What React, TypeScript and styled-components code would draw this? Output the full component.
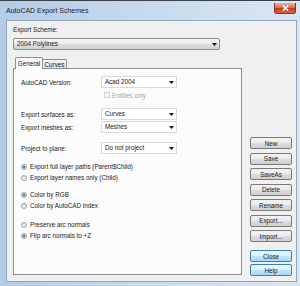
import React from 'react';
import styled, { createGlobalStyle, css } from 'styled-components';

const Global = createGlobalStyle`
  html, body { margin: 0; padding: 0; background: #2f3540; }
  body { font-family: "Liberation Sans", Arial, sans-serif; }
`;

const Window = styled.div`
  width: 300px;
  height: 286px;
  box-sizing: border-box;
  display: flex;
  flex-direction: column;
  background: linear-gradient(to right, #b4cbe5 0%, #c6d9ee 45%, #d9e6f4 100%);
  border-top: 1px solid #3b4048;
  padding: 0 3px 4px 6px;
`;

const TitleBar = styled.div`
  height: 19px;
  flex: none;
  display: flex;
  justify-content: space-between;
  align-items: flex-start;
`;

const TitleText = styled.div`
  margin-top: 6px;
  font-size: 7px;
  line-height: 8px;
  color: #1e1e1e;
`;

const CloseBtn = styled.div`
  box-sizing: border-box;
  width: 22px;
  height: 11px;
  margin-top: 2px;
  margin-right: 1px;
  border: 1px solid #8a2f1f;
  border-top: none;
  border-radius: 0 0 3px 3px;
  background: linear-gradient(#eab0a2 0%, #d9735b 45%, #c43a1f 55%, #d9663f 100%);
  display: flex;
  align-items: center;
  justify-content: center;
`;

const Client = styled.div`
  flex: 1;
  box-sizing: border-box;
  background: #f0f0f0;
  border: 1px solid #8fa5bf;
  padding: 4px 0 0 6px;
  display: flex;
  flex-direction: column;
  color: #202020;
  font-size: 6.3px;
`;

const FieldLabel = styled.div`
  line-height: 10px;
  height: 10px;
`;

const ComboBase = css`
  box-sizing: border-box;
  height: 12px;
  display: flex;
  align-items: center;
  justify-content: space-between;
  padding: 0 2px 0 3px;
  line-height: 10px;
`;

const SchemeCombo = styled.div`
  ${ComboBase};
  width: 207px;
  margin-top: 3px;
  border: 1px solid #8c8c8c;
  border-radius: 2px;
  background: linear-gradient(#f5f5f5 0%, #ececec 50%, #dedede 51%, #d2d2d2 100%);
`;

const Dropdown = styled.div`
  ${ComboBase};
  width: 76px;
  border: 1px solid #dadada;
  background: #ffffff;
`;

const MainRow = styled.div`
  display: flex;
  align-items: flex-start;
  margin-top: 7px;
`;

const TabArea = styled.div`
  width: 229px;
  display: flex;
  flex-direction: column;
`;

const TabStrip = styled.div`
  height: 11px;
  display: flex;
  align-items: flex-end;
  padding-left: 2px;
`;

const Tab = styled.div<{ $active?: boolean; $w: number }>`
  box-sizing: border-box;
  width: ${p => p.$w}px;
  display: flex;
  align-items: center;
  justify-content: center;
  border: 1px solid #8c8f97;
  border-bottom: none;
  border-radius: 2px 2px 0 0;
  position: relative;
  ${p => p.$active
    ? css`
      height: 12px;
      margin-bottom: -1px;
      background: #fcfcfc;
      z-index: 1;
    `
    : css`
      height: 9px;
      margin-left: -1px;
      background: linear-gradient(#f3f3f3, #e3e3e3);
    `}
`;

const Panel = styled.div`
  box-sizing: border-box;
  height: 207px;
  border: 1px solid #8c8f97;
  background: #fcfcfc;
  padding: 7px 0 0 7px;
  display: flex;
  flex-direction: column;
`;

const Row = styled.div<{ $mt?: number }>`
  display: flex;
  align-items: center;
  height: 12px;
  margin-top: ${p => p.$mt ?? 0}px;
`;

const RowLabel = styled.div`
  width: 80px;
`;

const CheckRow = styled.div`
  display: flex;
  align-items: center;
  height: 8px;
  margin-top: 3px;
  padding-left: 83px;
  color: #a3a3a3;
`;

const CheckBox = styled.span`
  box-sizing: border-box;
  width: 6px;
  height: 6px;
  border: 1px solid #cfcfcf;
  background: #f7f7f7;
  margin-right: 2px;
`;

const RadioRow = styled.div<{ $mt?: number }>`
  display: flex;
  align-items: center;
  height: 11px;
  margin-top: ${p => p.$mt ?? 0}px;
`;

const RadioDot = styled.span<{ $on?: boolean }>`
  box-sizing: border-box;
  width: 6px;
  height: 6px;
  border-radius: 50%;
  border: 1px solid #9a9da3;
  margin-right: 3px;
  background: ${p => p.$on
    ? 'radial-gradient(circle, #3c6a96 0%, #5b86ad 45%, #e9eef3 60%)'
    : 'linear-gradient(#dcdcdc, #f6f6f6)'};
`;

const ButtonCol = styled.div`
  width: 42px;
  margin-left: 8px;
  padding-top: 80px;
  display: flex;
  flex-direction: column;
  gap: 3.5px;
`;

const Button = styled.div<{ $primary?: boolean; $mt?: number }>`
  box-sizing: border-box;
  height: 12px;
  border-radius: 2px;
  display: flex;
  align-items: center;
  justify-content: center;
  margin-top: ${p => p.$mt ?? 0}px;
  ${p => p.$primary
    ? css`
      border: 1px solid #3c7fb1;
      background: linear-gradient(#eaf6fd 0%, #d9f0fc 50%, #bee6fd 51%, #a7d9f5 100%);
    `
    : css`
      border: 1px solid #7a7a7a;
      background: linear-gradient(#f3f3f3 0%, #ebebeb 50%, #dddddd 51%, #cfcfcf 100%);
    `}
`;

const Arrow = () => (
  <svg width="5" height="3" viewBox="0 0 5 3">
    <path d="M0 0 L5 0 L2.5 3 Z" fill="#111" />
  </svg>
);

const CloseX = () => (
  <svg width="7" height="6" viewBox="0 0 7 6">
    <path d="M1 0.5 L6 5.5 M6 0.5 L1 5.5" stroke="#ffffff" strokeWidth="1.6" />
  </svg>
);

export default function App() {
  return (
    <>
      <Global />
      <Window>
        <TitleBar>
          <TitleText>AutoCAD Export Schemes</TitleText>
          <CloseBtn><CloseX /></CloseBtn>
        </TitleBar>
        <Client>
          <FieldLabel>Export Scheme:</FieldLabel>
          <SchemeCombo>
            <span>2004 Polylines</span>
            <Arrow />
          </SchemeCombo>
          <MainRow>
            <TabArea>
              <TabStrip>
                <Tab $active $w={28}>General</Tab>
                <Tab $w={25}>Curves</Tab>
              </TabStrip>
              <Panel>
                <Row>
                  <RowLabel>AutoCAD Version:</RowLabel>
                  <Dropdown><span>Acad 2004</span><Arrow /></Dropdown>
                </Row>
                <CheckRow>
                  <CheckBox />
                  <span>Entities only</span>
                </CheckRow>
                <Row $mt={9}>
                  <RowLabel>Export surfaces as:</RowLabel>
                  <Dropdown><span>Curves</span><Arrow /></Dropdown>
                </Row>
                <Row $mt={1}>
                  <RowLabel>Export meshes as:</RowLabel>
                  <Dropdown><span>Meshes</span><Arrow /></Dropdown>
                </Row>
                <Row $mt={9}>
                  <RowLabel>Project to plane:</RowLabel>
                  <Dropdown><span>Do not project</span><Arrow /></Dropdown>
                </Row>
                <RadioRow $mt={7}>
                  <RadioDot $on />
                  <span>Export full layer paths (Parent$Child)</span>
                </RadioRow>
                <RadioRow>
                  <RadioDot />
                  <span>Export layer names only (Child)</span>
                </RadioRow>
                <RadioRow $mt={6}>
                  <RadioDot $on />
                  <span>Color by RGB</span>
                </RadioRow>
                <RadioRow>
                  <RadioDot />
                  <span>Color by AutoCAD index</span>
                </RadioRow>
                <RadioRow $mt={8}>
                  <RadioDot />
                  <span>Preserve arc normals</span>
                </RadioRow>
                <RadioRow>
                  <RadioDot $on />
                  <span>Flip arc normals to +Z</span>
                </RadioRow>
              </Panel>
            </TabArea>
            <ButtonCol>
              <Button>New</Button>
              <Button>Save</Button>
              <Button>SaveAs</Button>
              <Button>Delete</Button>
              <Button>Rename</Button>
              <Button>Export...</Button>
              <Button>Import...</Button>
              <Button $primary $mt={4.5}>Close</Button>
              <Button $primary $mt={-1.5}>Help</Button>
            </ButtonCol>
          </MainRow>
        </Client>
      </Window>
    </>
  );
}
